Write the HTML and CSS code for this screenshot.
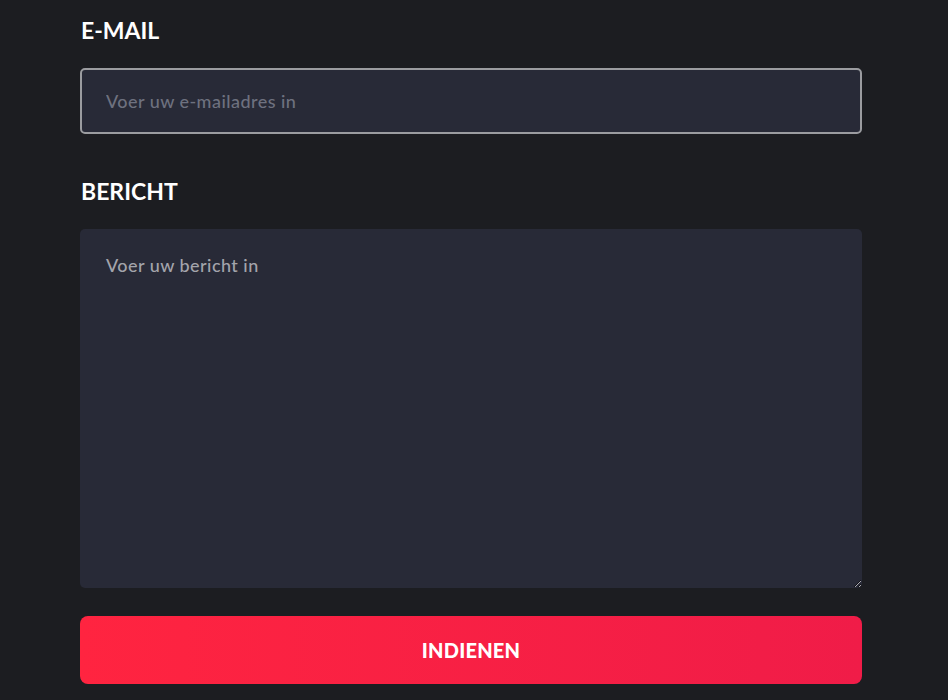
FILE: index.html
```html
<!DOCTYPE html>
<html lang="nl">
<head>
  <meta charset="UTF-8">
  <meta name="viewport" content="width=device-width, initial-scale=1.0">
  <title>Contact</title>
  <link rel="stylesheet" href="styles.css">
</head>
<body>
  <form class="contact-form">
    <label class="field-label" for="email">E-MAIL</label>
    <input class="field-input" id="email" type="email" placeholder="Voer uw e-mailadres in">

    <label class="field-label" for="message">BERICHT</label>
    <textarea class="field-textarea" id="message" placeholder="Voer uw bericht in"></textarea>

    <button class="submit-btn" type="button">INDIENEN</button>
  </form>
</body>
</html>
```

FILE: styles.css
```css
* {
  box-sizing: border-box;
}

body {
  margin: 0;
  padding: 0;
  background-color: #1c1d21;
  font-family: Lato, "Open Sans", Arial, sans-serif;
}

.contact-form {
  width: 782px;
  margin-left: 80px;
  padding-top: 16px;
  display: flex;
  flex-direction: column;
}

.field-label {
  display: block;
  color: #ffffff;
  font-size: 23px;
  line-height: 28px;
  font-weight: 700;
  padding-left: 1px;
  margin-bottom: 24px;
}

.field-input,
.field-textarea {
  width: 100%;
  background-color: #282a37;
  color: #ffffff;
  font-family: inherit;
  font-size: 18px;
  font-weight: 500;
  letter-spacing: 0.45px;
  border-radius: 5px;
  outline: none;
}

.field-input {
  height: 66px;
  border: 2px solid #9b9ca0;
  padding: 0 24px;
  margin-bottom: 43px;
}

.field-input::placeholder {
  color: #6e717f;
}

.field-textarea {
  height: 359px;
  border: none;
  padding: 25px 26px;
  resize: vertical;
  margin-bottom: 28px;
}

.field-textarea::placeholder {
  color: #a3a4ab;
}

.submit-btn {
  height: 68px;
  width: 100%;
  border: none;
  border-radius: 8px;
  background: linear-gradient(90deg, #ff2440 0%, #f01c48 100%);
  color: #ffffff;
  font-family: inherit;
  font-size: 20px;
  font-weight: 900;
  letter-spacing: 0.2px;
  cursor: pointer;
}
```
